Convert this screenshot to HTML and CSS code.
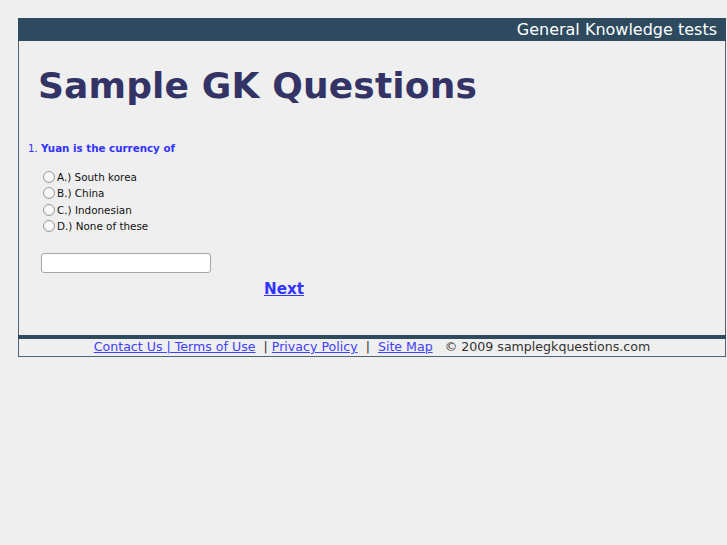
FILE: index.html
```html
<!DOCTYPE html>
<html>
<head>
<meta charset="utf-8">
<title>Sample GK Questions</title>
<link rel="stylesheet" href="styles.css">
</head>
<body>
<div class="page">
  <div class="frame">
    <div class="topbar">General Knowledge tests</div>
    <div class="main">
      <h1 class="title">Sample GK Questions</h1>
      <div class="question"><span class="qnum">1.</span> <b>Yuan is the currency of</b></div>
      <div class="options">
        <label class="opt"><span class="radio"></span>A.) South korea</label>
        <label class="opt"><span class="radio"></span>B.) China</label>
        <label class="opt"><span class="radio"></span>C.) Indonesian</label>
        <label class="opt"><span class="radio"></span>D.) None of these</label>
      </div>
      <div class="answer"><input type="text" class="answer-box"></div>
      <div class="next-row"><a href="#" class="next">Next</a></div>
    </div>
    <div class="footbar"></div>
    <div class="footer">
      <a href="#">Contact Us | Terms of Use</a>&nbsp; | <a href="#">Privacy Policy</a>&nbsp; | &nbsp;<a href="#">Site Map</a>&nbsp;&nbsp; © 2009 samplegkquestions.com
    </div>
  </div>
</div>
</body>
</html>
```
FILE: styles.css
```css
html, body {
  margin: 0;
  padding: 0;
  background: #efefef;
  font-family: "DejaVu Sans", Verdana, sans-serif;
}
.page {
  padding: 18px 0 0 18px;
}
.frame {
  width: 706px;
  border: 1px solid #4d6479;
  border-top: none;
  background: #efefef;
}
.topbar {
  background: #2e4a5f;
  height: 23px;
  line-height: 24px;
  color: #ffffff;
  font-size: 16px;
  text-align: right;
  padding-right: 9px;
  margin: 0 -1px;
}
.main {
  height: 294px;
  padding-left: 19px;
  box-sizing: border-box;
  display: flex;
  flex-direction: column;
}
.title {
  margin: 23px 0 0 0;
  font-size: 36px;
  line-height: 44px;
  font-weight: bold;
  letter-spacing: 0.15px;
  color: #333366;
}
.question {
  margin: 33px 0 0 -10px;
  font-size: 10.3px;
  line-height: 14px;
  color: #3333ff;
}
.question b {
  font-weight: bold;
}
.options {
  margin: 14px 0 0 5px;
  display: flex;
  flex-direction: column;
}
.opt {
  display: flex;
  align-items: center;
  height: 16.3px;
  font-size: 10.4px;
  color: #111;
}
.radio {
  width: 10px;
  height: 10px;
  border: 1px solid #9a9a9a;
  border-radius: 50%;
  background: radial-gradient(circle at 50% 40%, #ffffff 0%, #f4f4f4 60%, #dcdcdc 100%);
  margin-right: 2px;
}
.answer {
  margin: 19px 0 0 3px;
}
.answer-box {
  width: 170px;
  height: 20px;
  box-sizing: border-box;
  border: 1px solid #a5a5a5;
  border-radius: 3px;
  background: #ffffff;
  padding: 0;
  margin: 0;
  display: block;
}
.next-row {
  margin: 6px 0 0 226px;
}
.next {
  font-size: 15.2px;
  font-weight: bold;
  color: #3333ff;
  text-decoration: underline;
}
.footbar {
  height: 4px;
  background: #2e4a5f;
  margin: 0 -1px;
}
.footer {
  height: 17px;
  line-height: 16px;
  font-size: 12.6px;
  text-align: center;
  color: #333333;
  white-space: nowrap;
}
.footer a {
  color: #4040ff;
  text-decoration: underline;
}
```
